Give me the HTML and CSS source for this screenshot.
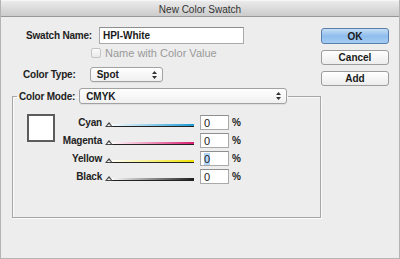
FILE: index.html
```html
<!DOCTYPE html>
<html lang="en">

<head>
  <meta charset="UTF-8">
  <title>New Color Swatch</title>
  <link rel="stylesheet" href="styles.css">
</head>

<body>
  <div class="window">
    <div class="titlebar">New Color Swatch</div>

    <div class="content">
      <div class="form">
        <div class="row-name">
          <span class="label">Swatch Name:</span>
          <div class="text-field name-field">HPI-White</div>
        </div>

        <div class="row-check">
          <span class="checkbox"></span>
          <span class="check-label">Name with Color Value</span>
        </div>

        <div class="row-type">
          <span class="label">Color Type:</span>
          <div class="popup type-popup">Spot
            <svg class="arrows" width="5" height="8" viewBox="0 0 5 8"><path d="M0 3L2.5 0L5 3Z M0 5L2.5 8L5 5Z" fill="#333"/></svg>
          </div>
        </div>

        <fieldset class="group">
          <legend class="group-legend">
            <span class="label">Color Mode:</span>
            <div class="popup mode-popup">CMYK
              <svg class="arrows" width="5" height="8" viewBox="0 0 5 8"><path d="M0 3L2.5 0L5 3Z M0 5L2.5 8L5 5Z" fill="#333"/></svg>
            </div>
          </legend>

          <div class="group-body">
            <div class="preview"></div>

            <div class="sliders">
              <div class="slider-row">
                <span class="label slider-label">Cyan</span>
                <div class="slider"><span class="thumb"></span><span class="track cyan"></span></div>
                <div class="text-field value-field">0</div>
                <span class="label pct">%</span>
              </div>
              <div class="slider-row">
                <span class="label slider-label">Magenta</span>
                <div class="slider"><span class="thumb"></span><span class="track magenta"></span></div>
                <div class="text-field value-field">0</div>
                <span class="label pct">%</span>
              </div>
              <div class="slider-row">
                <span class="label slider-label">Yellow</span>
                <div class="slider"><span class="thumb"></span><span class="track yellow"></span></div>
                <div class="text-field value-field"><span class="selected">0</span></div>
                <span class="label pct">%</span>
              </div>
              <div class="slider-row">
                <span class="label slider-label">Black</span>
                <div class="slider"><span class="thumb"></span><span class="track black"></span></div>
                <div class="text-field value-field">0</div>
                <span class="label pct">%</span>
              </div>
            </div>
          </div>
        </fieldset>
      </div>

      <div class="buttons">
        <div class="btn btn-default">OK</div>
        <div class="btn">Cancel</div>
        <div class="btn">Add</div>
      </div>
    </div>
  </div>
</body>

</html>
```

FILE: styles.css
```css
body {
  margin: 0;
  font-family: "Liberation Sans", Arial, sans-serif;
  color: #1a1a1a;
}

.window {
  width: 400px;
  height: 259px;
  box-sizing: border-box;
  background-color: #ededed;
  border: 1px solid #b4b4b4;
  border-top: 0;
  overflow: hidden;
}

.titlebar {
  height: 17px;
  line-height: 17px;
  box-sizing: border-box;
  text-align: center;
  font-size: 10px;
  color: #333;
  background: linear-gradient(#ebebeb, #cbcbcb);
  border-top: 1px solid #f6f6f6;
  border-bottom: 1px solid #979797;
}

.content {
  display: flex;
  padding-top: 10px;
}

.form {
  width: 320px;
}

.label {
  font-size: 10px;
  font-weight: bold;
  letter-spacing: -0.2px;
  color: #222;
}

.text-field {
  box-sizing: border-box;
  background: #fff;
  border: 1px solid #a9a9a9;
  border-top-color: #8e8e8e;
  font-size: 10px;
  font-weight: bold;
  padding-left: 3px;
  display: flex;
  align-items: center;
}

.row-name {
  display: flex;
  align-items: center;
  height: 17px;
  padding-left: 25px;
  gap: 7px;
}

.name-field {
  width: 145px;
  height: 17px;
}

.row-check {
  display: flex;
  align-items: center;
  height: 10px;
  margin-top: 4px;
  padding-left: 90px;
  gap: 4px;
}

.checkbox {
  width: 10px;
  height: 10px;
  box-sizing: border-box;
  border: 1px solid #c4c4c4;
  border-radius: 2px;
  background: linear-gradient(#fafafa, #eaeaea);
}

.check-label {
  font-size: 11px;
  color: #9a9a9a;
}

.row-type {
  display: flex;
  align-items: center;
  height: 15px;
  margin-top: 9px;
  padding-left: 22px;
  gap: 14px;
}

.popup {
  position: relative;
  box-sizing: border-box;
  height: 15px;
  padding-left: 6px;
  display: flex;
  align-items: center;
  font-size: 10px;
  font-weight: bold;
  border: 1px solid #a2a2a2;
  border-radius: 3px;
  background: linear-gradient(#ffffff, #f0f0f0);
  box-shadow: 0 1px 0 rgba(0, 0, 0, 0.06);
}

.arrows {
  position: absolute;
  right: 5px;
  top: 3px;
}

.type-popup {
  width: 73px;
}

.group {
  margin: 6px 0 0 11px;
  width: 309px;
  height: 130px;
  box-sizing: border-box;
  padding: 0;
  border: 1px solid #a6a6a6;
  box-shadow: inset 1px 1px 0 #fbfbfb, 1px 1px 0 #fbfbfb;
}

.group-legend {
  display: flex;
  align-items: center;
  gap: 4px;
  height: 16px;
  margin-left: 4px;
  padding: 0 1px 0 2px;
}

.mode-popup {
  width: 208px;
  height: 16px;
}

.group-body {
  display: flex;
  padding: 10px 0 0 14px;
}

.preview {
  width: 28px;
  height: 28px;
  box-sizing: border-box;
  background: #fff;
  border: 2px solid #5c5c5c;
}

.sliders {
  display: flex;
  flex-direction: column;
  gap: 3px;
  margin-top: 1px;
}

.slider-row {
  display: flex;
  align-items: center;
  height: 15px;
}

.slider-label {
  width: 47px;
  text-align: right;
}

.slider {
  position: relative;
  width: 89px;
  height: 15px;
  margin-left: 3px;
  margin-right: 6px;
}

.thumb {
  position: absolute;
  left: 0;
  top: 7px;
  width: 0;
  height: 0;
  border-left: 4px solid transparent;
  border-right: 4px solid transparent;
  border-bottom: 5px solid #444;
  z-index: 1;
}

.thumb::after {
  content: "";
  position: absolute;
  left: -2px;
  top: 2px;
  border-left: 2px solid transparent;
  border-right: 2px solid transparent;
  border-bottom: 2px solid #f4f4f4;
}

.track {
  position: absolute;
  left: 5px;
  right: 0;
  top: 9px;
  height: 2px;
  border-bottom: 1px solid #222;
}

.cyan {
  background: linear-gradient(to right, #ffffff, #1b9ad6);
}

.magenta {
  background: linear-gradient(to right, #ffffff, #d81e72);
}

.yellow {
  background: linear-gradient(to right, #ffffff, #f2e200);
}

.black {
  background: linear-gradient(to right, #ffffff, #1e1e1e);
}

.value-field {
  width: 29px;
  height: 15px;
  font-weight: normal;
  font-size: 11px;
}

.selected {
  background: #b5d5fb;
}

.pct {
  margin-left: 3px;
}

.buttons {
  display: flex;
  flex-direction: column;
  gap: 6px;
  margin-top: 1px;
}

.btn {
  box-sizing: border-box;
  width: 68px;
  height: 15px;
  display: flex;
  align-items: center;
  justify-content: center;
  font-size: 10px;
  font-weight: bold;
  color: #1a1a1a;
  border: 1px solid #9c9c9c;
  border-radius: 3px;
  background: linear-gradient(#ffffff, #ececec);
}

.btn-default {
  height: 16px;
  border-color: #5a7eab;
  background: linear-gradient(#c6def6, #8fbdec 50%, #a5cdf3);
}
```
